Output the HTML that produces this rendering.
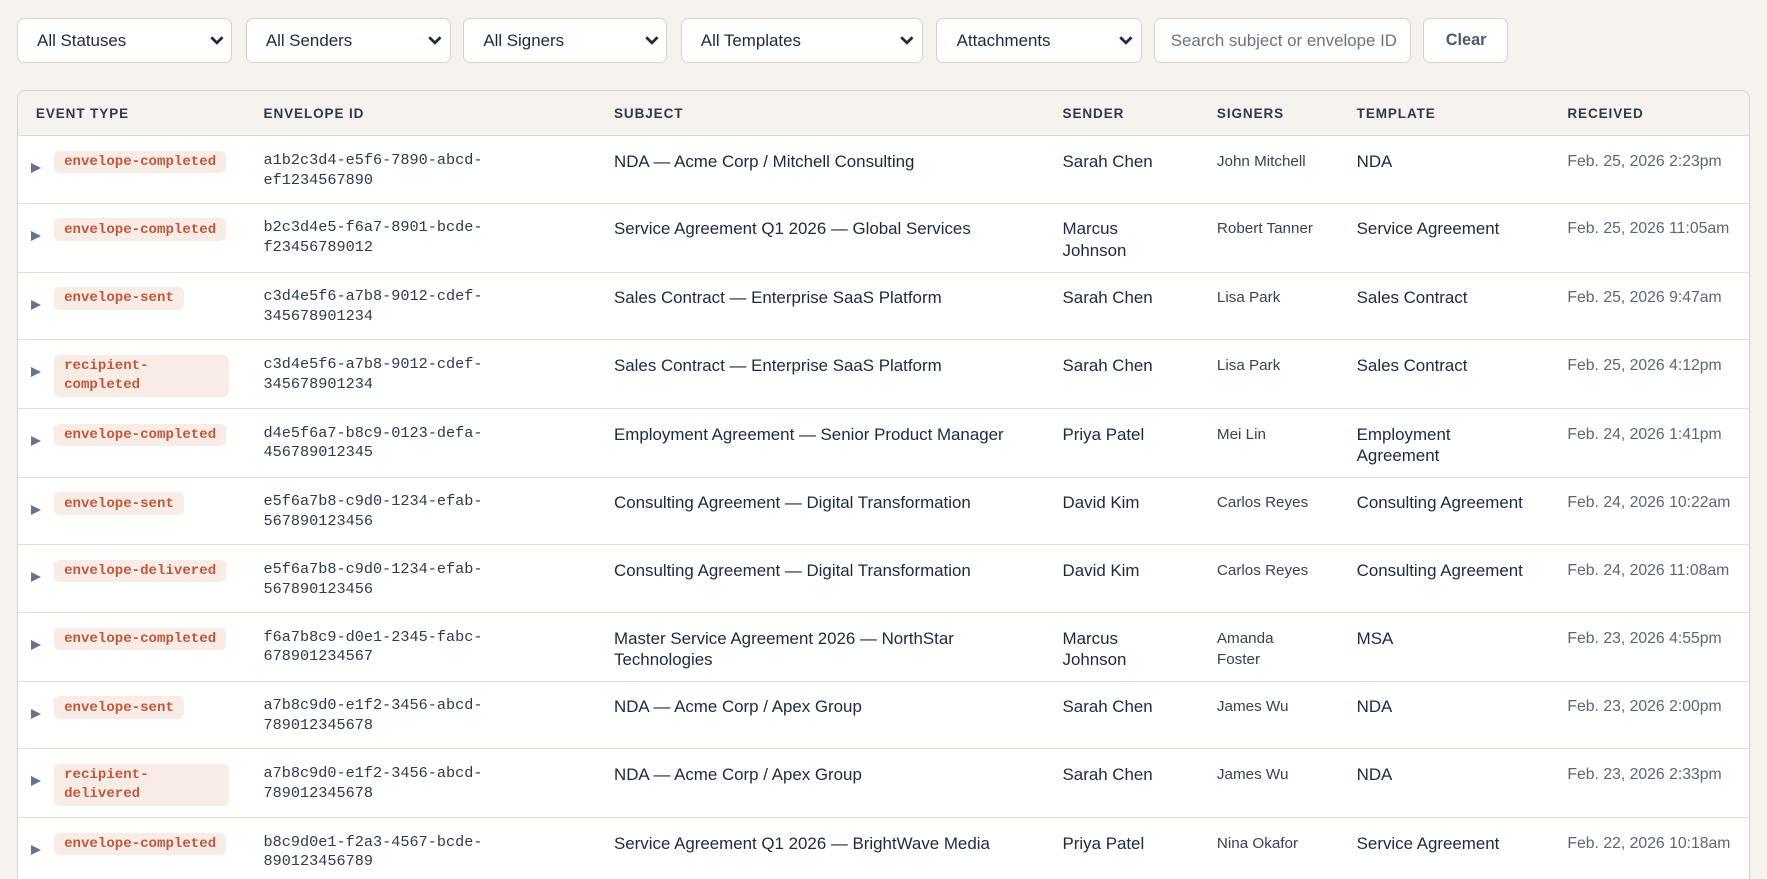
<!DOCTYPE html>
<html><head><meta charset="utf-8"><style>
*{box-sizing:border-box;margin:0;padding:0}
html,body{width:1767px;height:879px;overflow:hidden;background:#f6f3ee}
#w{zoom:1.12691;position:relative;width:1568px;height:780px;overflow:hidden;font-family:"Liberation Sans",sans-serif;color:#1b2a3f}
.f{position:absolute;top:16px;height:40px;background:#fff;border:1px solid #d9d1c6;border-radius:6px;font-size:15px;line-height:39px;padding-left:17px}
.f svg{position:absolute;right:6px;top:14px}
.tbl{position:absolute;left:15px;top:80px;width:1538px;height:820px;background:#fff;border:1px solid #d9d1c6;border-radius:8px;overflow:hidden}
.hd{position:absolute;left:0;top:0;width:100%;height:40px;background:#f6f3ee;border-bottom:1px solid #ddd6cc}
.hd span{position:absolute;top:13px;font-size:12px;font-weight:bold;letter-spacing:.8px;color:#2c3a4c}
.r{position:absolute;left:0;width:100%;border-bottom:1.5px solid #e2dcd3}
.c{position:absolute;top:13px;font-size:15px;line-height:19px}
.m{font-family:"Liberation Mono",monospace;font-size:13.5px;line-height:17.5px;color:#2c3a4c;top:13px}
.s{font-size:13.5px;color:#364254;top:13px}
.d{font-size:14px;color:#5a6676;top:13px}
.tri{position:absolute;left:12px;top:24px;width:0;height:0;border-left:9px solid #66758a;border-top:5px solid transparent;border-bottom:5px solid transparent}
.b{position:absolute;left:32px;top:13px;background:#f9ebe6;color:#c0583a;font-family:"Liberation Mono",monospace;font-size:12.5px;font-weight:bold;line-height:17px;padding:2px 9px 1px;border-radius:5px}
</style></head><body><div id="w">
<div class="f" style="left:15px;width:191px">All Statuses<svg width="14" height="10" viewBox="0 0 14 10"><path d="M2 2l5 5 5-5" stroke="#1b2a3f" stroke-width="2.4" fill="none"/></svg></div>
<div class="f" style="left:218px;width:182px">All Senders<svg width="14" height="10" viewBox="0 0 14 10"><path d="M2 2l5 5 5-5" stroke="#1b2a3f" stroke-width="2.4" fill="none"/></svg></div>
<div class="f" style="left:411px;width:181px">All Signers<svg width="14" height="10" viewBox="0 0 14 10"><path d="M2 2l5 5 5-5" stroke="#1b2a3f" stroke-width="2.4" fill="none"/></svg></div>
<div class="f" style="left:604px;width:215px">All Templates<svg width="14" height="10" viewBox="0 0 14 10"><path d="M2 2l5 5 5-5" stroke="#1b2a3f" stroke-width="2.4" fill="none"/></svg></div>
<div class="f" style="left:831px;width:182px">Attachments<svg width="14" height="10" viewBox="0 0 14 10"><path d="M2 2l5 5 5-5" stroke="#1b2a3f" stroke-width="2.4" fill="none"/></svg></div>
<div class="f" style="left:1024px;width:228px;padding-left:14px;color:#6b7480">Search subject or envelope ID</div>
<div class="f" style="left:1263px;width:75px;padding-left:19px;color:#4a5a70;font-weight:bold;font-size:14.5px">Clear</div>
<div class="tbl">
<div class="hd"><span style="left:16px">EVENT TYPE</span><span style="left:218px">ENVELOPE ID</span><span style="left:529px">SUBJECT</span><span style="left:927px">SENDER</span><span style="left:1064px">SIGNERS</span><span style="left:1188px">TEMPLATE</span><span style="left:1375px">RECEIVED</span></div>
<div class="r" style="top:40px;height:60px"><div class="tri"></div><div class="b">envelope-completed</div><div class="c m" style="left:218px">a1b2c3d4-e5f6-7890-abcd-<br>ef1234567890</div><div class="c" style="left:529px">NDA — Acme Corp / Mitchell Consulting</div><div class="c" style="left:927px">Sarah Chen</div><div class="c s" style="left:1064px">John Mitchell</div><div class="c" style="left:1188px">NDA</div><div class="c d" style="left:1375px">Feb. 25, 2026 2:23pm</div></div>
<div class="r" style="top:100px;height:61px"><div class="tri"></div><div class="b">envelope-completed</div><div class="c m" style="left:218px">b2c3d4e5-f6a7-8901-bcde-<br>f23456789012</div><div class="c" style="left:529px">Service Agreement Q1 2026 — Global Services</div><div class="c" style="left:927px">Marcus<br>Johnson</div><div class="c s" style="left:1064px">Robert Tanner</div><div class="c" style="left:1188px">Service Agreement</div><div class="c d" style="left:1375px">Feb. 25, 2026 11:05am</div></div>
<div class="r" style="top:161px;height:60px"><div class="tri"></div><div class="b">envelope-sent</div><div class="c m" style="left:218px">c3d4e5f6-a7b8-9012-cdef-<br>345678901234</div><div class="c" style="left:529px">Sales Contract — Enterprise SaaS Platform</div><div class="c" style="left:927px">Sarah Chen</div><div class="c s" style="left:1064px">Lisa Park</div><div class="c" style="left:1188px">Sales Contract</div><div class="c d" style="left:1375px">Feb. 25, 2026 9:47am</div></div>
<div class="r" style="top:221px;height:61px"><div class="tri"></div><div class="b" style="width:155px">recipient-<br>completed</div><div class="c m" style="left:218px">c3d4e5f6-a7b8-9012-cdef-<br>345678901234</div><div class="c" style="left:529px">Sales Contract — Enterprise SaaS Platform</div><div class="c" style="left:927px">Sarah Chen</div><div class="c s" style="left:1064px">Lisa Park</div><div class="c" style="left:1188px">Sales Contract</div><div class="c d" style="left:1375px">Feb. 25, 2026 4:12pm</div></div>
<div class="r" style="top:282px;height:61px"><div class="tri"></div><div class="b">envelope-completed</div><div class="c m" style="left:218px">d4e5f6a7-b8c9-0123-defa-<br>456789012345</div><div class="c" style="left:529px">Employment Agreement — Senior Product Manager</div><div class="c" style="left:927px">Priya Patel</div><div class="c s" style="left:1064px">Mei Lin</div><div class="c" style="left:1188px">Employment<br>Agreement</div><div class="c d" style="left:1375px">Feb. 24, 2026 1:41pm</div></div>
<div class="r" style="top:343px;height:60px"><div class="tri"></div><div class="b">envelope-sent</div><div class="c m" style="left:218px">e5f6a7b8-c9d0-1234-efab-<br>567890123456</div><div class="c" style="left:529px">Consulting Agreement — Digital Transformation</div><div class="c" style="left:927px">David Kim</div><div class="c s" style="left:1064px">Carlos Reyes</div><div class="c" style="left:1188px">Consulting Agreement</div><div class="c d" style="left:1375px">Feb. 24, 2026 10:22am</div></div>
<div class="r" style="top:403px;height:60px"><div class="tri"></div><div class="b">envelope-delivered</div><div class="c m" style="left:218px">e5f6a7b8-c9d0-1234-efab-<br>567890123456</div><div class="c" style="left:529px">Consulting Agreement — Digital Transformation</div><div class="c" style="left:927px">David Kim</div><div class="c s" style="left:1064px">Carlos Reyes</div><div class="c" style="left:1188px">Consulting Agreement</div><div class="c d" style="left:1375px">Feb. 24, 2026 11:08am</div></div>
<div class="r" style="top:463px;height:61px"><div class="tri"></div><div class="b">envelope-completed</div><div class="c m" style="left:218px">f6a7b8c9-d0e1-2345-fabc-<br>678901234567</div><div class="c" style="left:529px">Master Service Agreement 2026 — NorthStar<br>Technologies</div><div class="c" style="left:927px">Marcus<br>Johnson</div><div class="c s" style="left:1064px">Amanda<br>Foster</div><div class="c" style="left:1188px">MSA</div><div class="c d" style="left:1375px">Feb. 23, 2026 4:55pm</div></div>
<div class="r" style="top:524px;height:60px"><div class="tri"></div><div class="b">envelope-sent</div><div class="c m" style="left:218px">a7b8c9d0-e1f2-3456-abcd-<br>789012345678</div><div class="c" style="left:529px">NDA — Acme Corp / Apex Group</div><div class="c" style="left:927px">Sarah Chen</div><div class="c s" style="left:1064px">James Wu</div><div class="c" style="left:1188px">NDA</div><div class="c d" style="left:1375px">Feb. 23, 2026 2:00pm</div></div>
<div class="r" style="top:584px;height:61px"><div class="tri"></div><div class="b" style="width:155px">recipient-<br>delivered</div><div class="c m" style="left:218px">a7b8c9d0-e1f2-3456-abcd-<br>789012345678</div><div class="c" style="left:529px">NDA — Acme Corp / Apex Group</div><div class="c" style="left:927px">Sarah Chen</div><div class="c s" style="left:1064px">James Wu</div><div class="c" style="left:1188px">NDA</div><div class="c d" style="left:1375px">Feb. 23, 2026 2:33pm</div></div>
<div class="r" style="top:645px;height:61px"><div class="tri"></div><div class="b">envelope-completed</div><div class="c m" style="left:218px">b8c9d0e1-f2a3-4567-bcde-<br>890123456789</div><div class="c" style="left:529px">Service Agreement Q1 2026 — BrightWave Media</div><div class="c" style="left:927px">Priya Patel</div><div class="c s" style="left:1064px">Nina Okafor</div><div class="c" style="left:1188px">Service Agreement</div><div class="c d" style="left:1375px">Feb. 22, 2026 10:18am</div></div>
</div>
</div></body></html>
